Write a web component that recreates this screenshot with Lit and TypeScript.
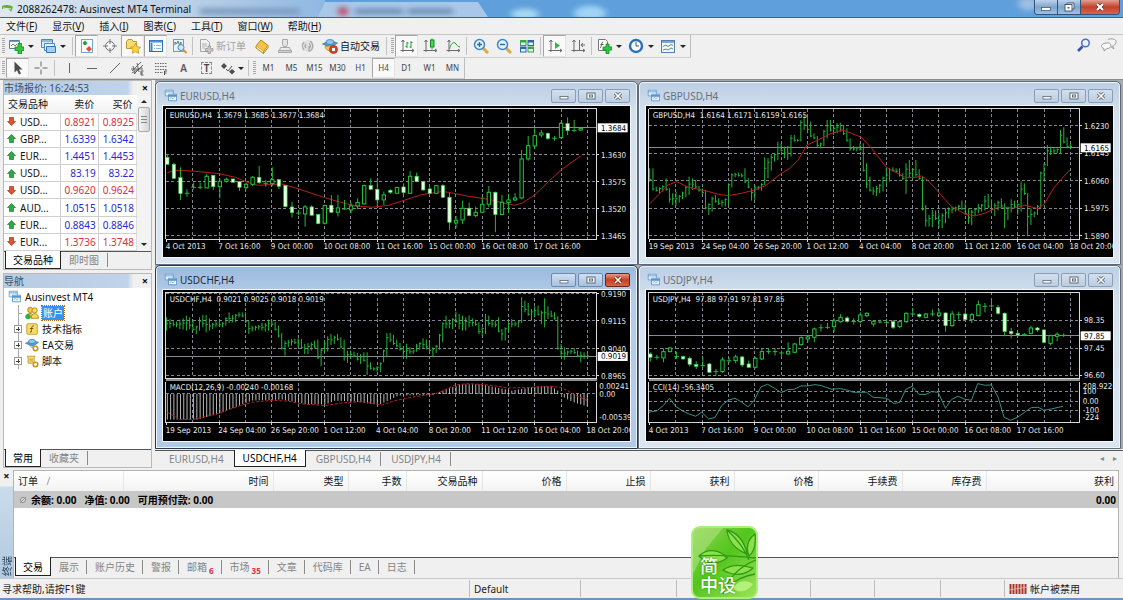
import { LitElement, html, svg, css, nothing } from "lit";
import { customElement, property } from "lit/decorators.js";
import { classMap } from "lit/directives/class-map.js";

/* ---------- icons, all on a 16 x 16 grid ---------- */
const green = "#1fa32e";
const axes = svg`<path d="M4 2v12M1.500 12.500H15M2.500 4 4 2l1.500 2M13 11l2 1.500-2 1.500" fill="none" stroke="#6b6b6b"/>`;
const pages = svg`<path d="M1.500 1.500h10v7h-10z" fill="#e3f0fb" stroke="#5b9bd0"/><path d="M1.500 3.500h10" stroke="#5b9bd0"/><path d="M5.500 6.500h10v8h-10z" fill="#eef6fd" stroke="#4a8cc6"/><path d="M5.500 8.500h10" stroke="#4a8cc6" stroke-width="2"/><path d="m7 12 2-1.500 2 1.500 2-1.500" fill="none" stroke="#6aa9d8"/>`;
const gear = svg`<circle cx="12" cy="12" r="2.600" fill="#fff" stroke="#c9931c" stroke-width="1.800"/>`;
const hat = svg`<path d="M0.500 6 8 2.500 15.500 5 9 9.500z" fill="#4f9fd4" stroke="#2c709f" stroke-width=".7"/><ellipse cx="8" cy="4" rx="4" ry="2.500" fill="#8cc7ec" stroke="#2c709f" stroke-width=".7"/>`;

const icons: Record<string, unknown> = {
  newChart: svg`<path d="M1.500 2.500h10v8h-10z" fill="#fff" stroke="#4b7fae"/><path d="M1.500 3.500h10" stroke="#6fb06f"/><path d="m3 8 2-2 2 2 2-2" fill="none" stroke="#777"/><path d="M10 5.500h3.500V9H16v3.500h-2.500V16H10v-3.500H7V9h3z" fill="#35c441" stroke="#138a20" stroke-width=".8"/>`,
  profiles: svg`<path d="M1.500 1.500h11v8h-11z" fill="#d9eafa" stroke="#4b86bd"/><path d="M1.500 3h11" stroke="#4b86bd"/><path d="M4.500 5.500h10v7h-10z" fill="#e9f3fc" stroke="#4b86bd"/><path d="M6.500 8.500h9v6h-9z" fill="#a9cdec" stroke="#3a74ab"/>`,
  market: svg`<rect x="2.500" y="1.500" width="11" height="13" fill="#fdfdfd" stroke="#6ea4d8"/><path d="m5 7-1.500-2L6 2.500 8.500 5 7 7z" fill="#24a63a"/><path d="m10 8 3 3-3 3-3-3z" fill="#e2502a"/>`,
  target: svg`<circle cx="8" cy="8" r="4.500" fill="#f6f6f6" stroke="#777"/><path d="M8 1v5M8 10v5M1 8h5M10 8h5" stroke="#777"/>`,
  favorites: svg`<path d="M1.500 3.500 3 1.500h4l1 2h3.500v7h-10z" fill="#f7dc74" stroke="#c19a2b"/><path d="m10.500 5.500 1.600 3.300 3.500.5-2.600 2.400.7 3.600-3.200-1.700-3.200 1.700.7-3.600-2.600-2.400 3.500-.5z" fill="#ffd633" stroke="#c1901b" stroke-width=".8"/>`,
  navigator: svg`<rect x="1.500" y="2.500" width="13" height="11" fill="#fff" stroke="#2e6db4"/><path d="M2 3.500h12" stroke="#4d8fd6" stroke-width="2"/><path d="M3.500 5v8" stroke="#3b82c8" stroke-width="2"/><path d="M6 7.500h1M8 7.500h5M6 10.500h1M8 10.500h5" stroke="#8ab4dd"/>`,
  tester: svg`<rect x="2.500" y="1.500" width="10" height="12" fill="#e7f1fb" stroke="#6f9dc9"/><path d="M4 7V4l1.500 2L7 3l1.500 4L10 4v4" fill="none" stroke="#5a7f5d"/><circle cx="10" cy="9.500" r="3" fill="#cde6fa" stroke="#4c87bf"/><path d="m12.500 12 3 3" stroke="#cf9a2e" stroke-width="2"/>`,
  order: svg`<path d="M2.500 1.500h6l3 3v9h-9z" fill="#f1f1f1" stroke="#a5a5a5"/><path d="M4 6h5M4 8h5M4 10h3" stroke="#b0b0b0"/><path d="M10 8h2.500v2.500H15V13h-2.500v2.500H10V13H7.500v-2.500H10z" fill="#c9c9c9" stroke="#909090" stroke-width=".7"/>`,
  editor: svg`<path d="m2 8 5-6 7 5.500-4.500 6z" fill="#f4c544" stroke="#b98213"/><path d="M2 8v2l7.500 5.500v-2M9.500 15.500l4.500-6v-2" fill="#fff2c4" stroke="#b98213"/>`,
  person: svg`<path d="M5.500 1.500h5v5l-1 2h-3l-1-2z" fill="#e3e3e3" stroke="#a8a8a8"/><path d="M3.500 9.500h9l1 3h-11z" fill="#ececec" stroke="#a8a8a8"/><path d="M1.500 12.500h13v2h-13z" fill="#d2d2d2" stroke="#a8a8a8"/>`,
  signal: svg`<circle cx="8" cy="8" r="6" fill="#e2e2e2"/><path d="M4 12A6 6 0 0 1 4 4M6 10a3 3 0 0 1 0-4M10 3a6 6 0 0 1 0 10M9 5.500a3 3 0 0 1 0 5M9 8v6" fill="none" stroke="#a9a9a9" stroke-width="1.300"/>`,
  auto: svg`${hat}<path d="M3 8.500c1 4 4 5 8 4l1-5z" fill="#efc65a" stroke="#a98122" stroke-width=".7"/><circle cx="11.500" cy="11.500" r="4" fill="#e0402c" stroke="#a3200f" stroke-width=".7"/><path d="M10 10h3v3h-3z" fill="#fff"/>`,
  bars: svg`${axes}<path d="M8 4v6M6.500 8.500H8M8 5h1.500M12 3v7M10.500 9H12M12 4.500h1.500" stroke="${green}" fill="none"/>`,
  candles: svg`${axes}<path d="M10 0.500v11" stroke="${green}"/><rect x="8.500" y="2" width="3.500" height="7" fill="#4cd35b" stroke="#138a20"/>`,
  line: svg`${axes}<path d="M4.500 11C6 5 9 3 11 6c1 1.500 2 2.500 4 3" stroke="${green}" fill="none"/>`,
  zoomIn: svg`<path d="m10 10 5 5" stroke="#d8ac3c" stroke-width="3"/><circle cx="6.500" cy="6.500" r="5" fill="#e1f1fd" stroke="#3d87c4" stroke-width="1.500"/><path d="M4 6.500h5M6.500 4v5" stroke="#2b6da8" stroke-width="1.400"/>`,
  zoomOut: svg`<path d="m10 10 5 5" stroke="#d8ac3c" stroke-width="3"/><circle cx="6.500" cy="6.500" r="5" fill="#e1f1fd" stroke="#3d87c4" stroke-width="1.500"/><path d="M4 6.500h5" stroke="#2b6da8" stroke-width="1.400"/>`,
  tile: svg`<path d="M1 2h6.500v6H1zM8.500 8.500H15v6H8.500z" fill="#3fa13f"/><path d="M8.500 2H15v6H8.500zM1 8.500h6.500v6H1z" fill="#2c64b0"/><path d="M2 4.500h4.500v2.500H2zM9.500 4.500H14v2.500H9.500zM2 11h4.500v2.500H2zM9.500 11H14v2.500H9.500z" fill="#dfeefb"/>`,
  scroll: svg`${axes}<path d="M8 4v7l5-3.500z" fill="#36b544"/>`,
  shift: svg`${axes}<path d="M9.500 2v10M15 7h-4M13 5l-2 2 2 2" stroke="#666" fill="none"/>`,
  indicator: svg`<path d="M2.500 1.500h7l2 2v9h-9z" fill="#fff" stroke="#777"/><path d="M7 4c-2 0-1 5-3 6M4.500 6.500h3" stroke="#555" fill="none"/><path d="M10 6h3v3h3v3h-3v3.500h-3V12H7V9h3z" fill="#35c441" stroke="#138a20" stroke-width=".8"/>`,
  clock: svg`<circle cx="8" cy="8" r="6" fill="#f4faff" stroke="#2a6fbd" stroke-width="2.400"/><path d="M8 4v4h3" stroke="#555" fill="none"/>`,
  template: svg`<rect x="1.500" y="2.500" width="13" height="12" fill="#f3f8fd" stroke="#527fa9"/><path d="M2 4h12" stroke="#7ba7d2" stroke-width="2"/><path d="m3 8.500 3-1.500 2 1.500 3-2 2 1M3 12l3-1 2 1 3-2 2 1" stroke="#5d8b74" fill="none"/>`,
  cursor: svg`<path d="M4.500 1.500v11l2.500-2.300 2 4.300 2-1-2-4h3.500z" fill="#4c4c4c"/>`,
  cross: svg`<path d="M8 1.500v5M8 9.500v5M1.500 8h5M9.500 8h5" stroke="#666"/>`,
  vline: svg`<path d="M8.500 3v10" stroke="#666"/>`,
  hline: svg`<path d="M3 8.500h10" stroke="#666"/>`,
  trend: svg`<path d="m3 13 10-10" stroke="#666"/>`,
  channel: svg`<path d="m2 11 9-9M4 14l9-9M1 9h12M3 6l2 8M7 3l2 9M2 13l10-6" stroke="#666" fill="none"/><path d="M13.500 11H11v4h2.500M11 13h2" stroke="#555" fill="none"/>`,
  fibo: svg`<path d="M2 3.500h12M2 6.500h12M2 9.500h12M2 12.500h8" stroke="#666" stroke-dasharray="1.500 1"/><path d="M14 11h-2.500v4M11.500 13h2" stroke="#555" fill="none"/>`,
  arrows: svg`<path d="m4 3 3 3-3 3-3-3zM12 9l3 2.500-3 3-3-3z" fill="#4d4d4d"/><path d="m6 9 2 2 4-5" fill="none" stroke="#4d4d4d"/>`,
  search: svg`<path d="m2 14 4.500-4.500" stroke="#3557a8" stroke-width="2.600"/><circle cx="9.500" cy="6" r="3.800" fill="#eef3ff" stroke="#4c6fbe" stroke-width="1.500"/>`,
  chat: svg`<path d="M7 3c0-1.500 8-2 8 1.500S12 9 11.500 9L13 12 9 9" fill="#f4f4f4" stroke="#9b9b9b"/><path d="M5 6c3-.5 5 .5 5 2.500S8 11.500 6 11.500L3 14v-2.500C-1 10.500 0 6.500 5 6z" fill="#fafafa" stroke="#9b9b9b"/>`,
  pages,
  account: svg`<circle cx="6" cy="4.500" r="3" fill="#f3c544" stroke="#b28313"/><path d="M1 13c0-6 9-6 9 0z" fill="#f3c544" stroke="#b28313"/><circle cx="11" cy="5" r="3" fill="#f9d866" stroke="#b28313"/><path d="M7 14c0-7 8.500-7 8.500 0z" fill="#f9d866" stroke="#b28313"/><circle cx="3.500" cy="12" r="3" fill="#2fae3c"/>`,
  func: svg`<rect x="2" y="2" width="12" height="12" rx="1" fill="#f7dc66" stroke="#c2982a"/><path d="M10 4.500c-3-.5-2 3-3 7H5.500M5.500 7.500h4" stroke="#5b4a10" fill="none"/>`,
  expert: svg`${hat}<path d="M5 8c1 3 3 3 5 3" fill="none" stroke="#c9931c"/>${gear}`,
  script: svg`<path d="M2.500 2.500h9l-1 2v6h-7v-6z" fill="#f7dc74" stroke="#c19a2b"/><path d="M5 6h4M5 8h4" stroke="#c19a2b"/>${gear}`,
};

@customElement("mt-icon")
class MtIcon extends LitElement {
  @property() name = "";
  static styles = css`
    :host { display: inline-flex; width: 16px; height: 16px; flex: none; }
    svg { width: 100%; height: 100%; }
  `;
  render() {
    return html`<svg viewBox="0 0 16 16" aria-hidden="true">${icons[this.name]}</svg>`;
  }
}

/* ---------- chart data, drawn in thirds of a pixel ---------- */
type Pt = [number, number];
/* high, body top, body bottom, low, 1 = bearish (filled) */
type Candle = [number, number, number, number, number];
interface Chart {
  id: string;
  info: string;
  active?: boolean;
  top: number;
  plot: [number, number];
  levels: [number, string][];
  price: [number, string];
  times: string[];
  candles?: Candle[];
  bars?: Pt[];
  average?: string;
  sub?: { title: string; kind: "macd" | "cci"; labels: [number, string][] };
}

const eur: Candle[] = [
  [222,232,253,253,1],[248,253,295,297,1],[262,293,341,360,1],[328,339,341,350,1],[308,321,323,328,1],[308,321,323,328,1],
  [282,289,324,324,0],[286,286,320,330,1],[295,304,320,355,0],[293,298,304,308,0],[297,297,307,307,1],[305,305,322,333,1],
  [308,313,323,328,0],[288,292,313,318,0],[258,292,308,312,1],[300,309,311,320,1],[262,299,311,318,0],[299,299,319,327,1],
  [315,317,380,382,1],[365,381,398,413,1],[390,398,401,405,1],[375,381,402,440,0],[376,381,406,406,1],[402,404,431,433,1],
  [374,377,430,434,0],[345,376,397,400,1],[345,384,397,410,0],[360,385,389,390,1],[368,378,390,400,0],[355,368,378,388,0],
  [314,317,372,374,0],[295,317,328,330,1],[298,328,360,378,1],[335,345,360,375,0],[328,331,337,342,1],[320,323,340,342,0],
  [310,321,338,352,1],[273,289,340,342,0],[278,289,305,307,1],[303,305,330,332,1],[320,327,340,342,1],[315,317,340,342,0],
  [313,317,352,354,1],[338,352,427,450,1],[408,421,429,445,0],[362,385,420,432,0],[368,385,407,409,1],[380,397,407,412,0],
  [350,373,397,400,0],[318,337,373,382,0],[335,337,404,457,1],[345,367,404,406,0],[342,360,368,400,0],[340,354,360,364,0],
  [210,237,354,358,0],[168,197,237,242,0],[145,167,198,208,0],[150,159,165,172,0],[158,160,175,180,1],[168,174,176,182,1],
  [126,130,173,176,0],[112,131,152,165,1],[120,151,153,155,1],[143,145,150,153,0],
];
const jpy: Candle[] = [
  [270,275,285,298,1],[278,284,286,292,1],[258,268,287,300,0],[254,257,268,270,0],[268,282,284,290,1],[280,283,290,292,1],
  [283,288,306,312,1],[297,307,312,320,1],[285,309,311,316,1],[302,305,330,332,1],[320,327,329,340,1],[285,293,328,332,0],
  [285,294,297,302,1],[277,284,295,303,0],[282,284,308,314,1],[295,305,315,317,1],[284,288,315,318,0],[260,268,290,293,0],
  [258,267,269,275,1],[258,267,269,280,1],[265,270,274,285,1],[240,267,275,277,0],[242,245,270,273,0],[222,226,247,250,0],
  [219,224,230,240,0],[196,200,225,240,0],[185,195,198,208,1],[182,193,197,200,1],[168,176,193,210,0],[155,165,178,181,0],
  [162,167,177,181,1],[168,176,179,187,1],[150,158,178,183,0],[150,153,160,164,0],[173,177,185,193,0],[172,177,181,184,1],
  [174,180,182,184,1],[173,178,195,200,1],[174,178,193,198,0],[150,153,178,182,0],[138,154,156,158,1],[153,156,162,166,1],
  [152,155,165,168,0],[142,153,157,162,1],[140,152,160,165,0],[150,152,190,208,1],[146,155,190,193,0],[148,156,158,172,1],
  [145,155,172,177,1],[152,157,172,182,0],[115,127,160,162,0],[122,130,134,150,1],[108,130,132,136,1],[128,135,153,157,1],
  [150,153,208,222,1],[197,207,214,228,1],[208,213,218,222,1],[212,215,219,222,1],[190,197,213,216,0],[194,197,203,208,1],
  [200,203,240,243,1],[217,220,243,250,0],[210,216,222,237,0],[213,218,220,224,1],
];
const gbp: Pt[] = [
  [265,305],[265,332],[320,335],[322,340],[316,335],[295,332],[325,368],[340,375],[335,378],[345,368],[335,358],[318,352],
  [290,345],[295,330],[300,325],[318,335],[325,342],[330,388],[370,405],[350,395],[345,368],[355,375],[360,380],[355,380],
  [310,375],[280,322],[278,292],[278,290],[280,292],[265,310],[295,325],[325,362],[315,360],[318,330],[310,332],[232,315],
  [235,295],[222,272],[220,245],[185,240],[190,215],[200,235],[198,240],[165,230],[165,185],[178,185],[120,185],[105,150],
  [110,160],[125,172],[160,178],[168,202],[188,205],[150,198],[120,175],[120,155],[135,165],[130,160],[128,155],[135,165],
  [145,185],[175,212],[198,212],[200,214],[190,212],[190,275],[250,325],[290,335],[322,345],[318,348],[312,340],[290,335],
  [262,315],[265,305],[262,275],[265,278],[265,290],[280,300],[250,342],[240,295],[265,295],[240,290],[268,300],[290,392],
  [375,440],[405,440],[390,442],[392,420],[400,445],[400,445],[385,430],[382,415],[380,400],[380,395],[375,390],[362,390],
  [370,405],[385,432],[390,435],[385,408],[372,400],[372,395],[348,392],[342,385],[358,400],[370,408],[362,392],[355,382],
  [370,445],[380,420],[358,398],[362,385],[370,405],[305,395],[310,345],[340,465],[385,435],[395,412],[375,405],[275,385],
  [250,305],[195,258],[200,225],[205,222],[205,220],[150,220],[142,190],[172,205],[190,208],
];
const chf: Pt[] = [
  [165,205],[170,198],[175,192],[178,195],[172,200],[168,202],[160,205],[165,200],[172,205],[190,215],[165,205],[158,195],
  [158,210],[168,205],[182,200],[175,195],[178,192],[180,195],[165,190],[150,182],[158,180],[155,180],[150,165],[150,165],
  [150,182],[175,215],[190,208],[190,205],[188,202],[182,205],[182,208],[172,205],[175,190],[178,205],[190,225],[212,262],
  [235,280],[232,255],[230,250],[230,245],[228,255],[230,260],[245,275],[242,275],[240,265],[235,258],[232,290],[260,312],
  [235,272],[222,268],[215,248],[220,245],[215,235],[225,258],[232,295],[265,302],[265,290],[268,285],[272,295],[275,305],
  [270,298],[270,338],[300,322],[315,325],[312,328],[300,330],[262,300],[212,285],[212,240],[218,248],[232,255],[242,265],
  [255,285],[245,290],[255,275],[262,275],[245,268],[240,262],[228,260],[232,262],[240,268],[255,285],[248,272],[215,262],
  [180,240],[160,198],[172,198],[168,200],[148,182],[155,200],[160,205],[165,205],[160,195],[168,192],[172,190],[180,215],
  [195,220],[155,215],[160,190],[172,195],[175,195],[165,210],[200,235],[195,235],[180,210],[170,195],[178,192],[175,195],
  [105,182],[115,150],[122,160],[140,175],[132,165],[130,160],[145,185],[108,195],[132,170],[145,165],[150,172],[162,262],
  [245,285],[255,292],[265,280],[262,275],[258,275],[265,285],[268,300],[270,290],[272,290],
];
const macdHist: Pt[] = [
  [34,472],[125,472],[190,455],[240,435],[290,415],[380,412],[450,425],[510,427],[540,415],[600,418],[670,428],[700,415],
  [730,400],[835,398],[850,390],[890,375],[920,366],[980,366],[1020,375],[1070,385],[1110,378],[1150,372],[1190,373],
  [1210,386],[1230,408],[1260,422],[1297,432],
];
const macdSignal =
  "36,450 75,472 113,472 190,453 250,432 290,420 350,414 400,417 440,425 510,430 560,422 620,418 680,428 720,415 770,405 850,392 900,368 940,364 1000,368 1060,377 1120,376 1190,372 1220,376 1260,398 1297,415";
const cciLine =
  "32,450 55,446 75,430 93,408 112,432 134,447 154,456 172,462 190,450 211,470 230,466 250,430 270,414 290,408 311,420 329,434 348,414 368,374 388,366 409,378 429,391 449,382 468,381 488,371 508,371 530,367 550,370 580,381 605,379 630,384 645,390 685,390 705,405 745,408 768,424 785,420 803,381 822,372 842,396 862,397 880,388 900,390 922,438 940,412 960,402 980,411 1000,414 1019,364 1040,369 1060,368 1080,405 1098,465 1117,474 1137,466 1160,450 1180,436 1200,435 1218,444 1240,440 1275,432";

const shortTimes = ["4 Oct 2013", "7 Oct 16:00", "9 Oct 00:00", "10 Oct 08:00", "11 Oct 16:00", "15 Oct 00:00", "16 Oct 08:00", "17 Oct 16:00"];
const longTimes = ["19 Sep 2013", "24 Sep 04:00", "26 Sep 20:00", "1 Oct 12:00", "4 Oct 04:00", "8 Oct 20:00", "11 Oct 12:00", "16 Oct 04:00", "18 Oct 20:00"];

const charts: Chart[] = [
  {
    id: "EURUSD,H4", info: "1.3679 1.3685 1.3677 1.3684", top: 78, plot: [87, 478],
    levels: [[225, "1.3630"], [306, "1.3575"], [387, "1.3520"], [468, "1.3465"]],
    price: [143, "1.3684"], times: shortTimes, candles: eur,
    average: "36,278 60,271 110,273 190,281 240,292 290,312 310,316 380,312 430,327 508,353 560,368 600,378 650,382 700,376 744,362 800,344 860,335 880,337 940,349 1000,358 1060,373 1079,376 1100,370 1139,345 1180,305 1218,270 1277,228",
  },
  {
    id: "GBPUSD,H4", info: "1.6164 1.6171 1.6159 1.6165", top: 78, plot: [87, 478],
    levels: [[138, "1.6230"], [220, "1.6145"], [303, "1.6060"], [385, "1.5975"], [468, "1.5890"]],
    price: [203, "1.6165"], times: longTimes, bars: gbp,
    average: "34,372 60,345 90,315 115,305 150,322 200,332 240,343 270,347 310,340 350,330 380,318 430,280 455,265 480,240 506,195 540,180 575,162 613,150 640,160 670,172 700,205 745,262 800,292 830,293 850,288 870,302 900,335 940,380 980,402 1010,408 1040,400 1080,382 1130,384 1160,376 1200,386 1220,370 1250,320 1295,270",
  },
  {
    id: "USDCHF,H4", info: "0.9021 0.9025 0.9018 0.9019", active: true, top: 83, plot: [90, 349],
    levels: [[95, "0.9190"], [176, "0.9115"], [260, "0.9040"], [341, "0.8965"]],
    price: [282, "0.9019"], times: longTimes, bars: chf,
    sub: { title: "MACD(12,26,9) -0.00240 -0.00168", kind: "macd", labels: [[371, "0.00241"], [395, "0.00"], [465, "-0.00539"]] },
  },
  {
    id: "USDJPY,H4", info: "97.88 97.91 97.81 97.85", top: 83, plot: [90, 349],
    levels: [[174, "98.35"], [258, "97.45"], [340, "96.60"]],
    price: [220, "97.85"], times: shortTimes, candles: jpy,
    sub: { title: "CCI(14) -56.3405", kind: "cci", labels: [[373, "208.9226"], [388, "100"], [418, "0.00"], [445, "-100"], [465, "-224"]] },
  },
];

const LEFT = 32;
const RIGHT = 1325;

function interpolate(pts: Pt[], x: number): number {
  for (let i = 1; i < pts.length; i++) {
    const [x0, y0] = pts[i - 1];
    const [x1, y1] = pts[i];
    if (x <= x1) return y0 + ((y1 - y0) * (x - x0)) / (x1 - x0);
  }
  return pts[pts.length - 1][1];
}

@customElement("mt-chart")
class MtChart extends LitElement {
  @property({ attribute: false }) chart!: Chart;

  static styles = css`
    :host { display: block; background: #000; overflow: hidden; min-height: 0; }
    svg { display: block; width: 100%; height: 100%; }
    text { font: 24px "DejaVu Sans Condensed", "Noto Sans", sans-serif; fill: #e9e9e9; }
    .tag { fill: #000; }
    .frame { fill: none; stroke: #d8d8d8; stroke-width: 3; shape-rendering: crispEdges; }
    .grid { fill: none; stroke: #81858f; stroke-width: 3; stroke-dasharray: 9 7; shape-rendering: crispEdges; }
    .now { stroke: #848c94; stroke-width: 3; shape-rendering: crispEdges; }
    .split { stroke: #8f8f8f; stroke-width: 6; shape-rendering: crispEdges; }
    .wick { stroke: #22b83a; stroke-width: 3; fill: none; }
    .up { fill: #000; stroke: #22c43c; stroke-width: 3; }
    .down { fill: #e8ffe2; stroke: #35d44b; stroke-width: 2; }
    .avg { fill: none; stroke: #b8201c; stroke-width: 3; }
    .signal { stroke-dasharray: 9 5; }
    .hist { stroke: #b9b9b9; stroke-width: 3; }
    .cci { fill: none; stroke: #3a8f87; stroke-width: 3; }
  `;

  private candles(list: Candle[]) {
    const step = (1277 - 36) / (list.length - 1);
    return list.map(([hi, top, bottom, lo, bear], i) => {
      const x = 36 + i * step;
      const wick = svg`<path class="wick" d="M${x} ${hi}V${lo}"/>`;
      return bottom - top <= 4
        ? svg`${wick}<path class="wick" d="M${x - 7} ${(top + bottom) / 2}h14"/>`
        : svg`${wick}<rect class=${bear ? "down" : "up"} x=${x - 5} y=${top} width="10" height=${bottom - top}/>`;
    });
  }

  private bars(list: Pt[]) {
    const step = (1297 - 34) / (list.length - 1);
    const d = list
      .map(([hi, lo], i) => {
        const x = 34 + i * step;
        const next = list[Math.min(i + 1, list.length - 1)];
        const close = Math.min(lo - 4, Math.max(hi + 4, (next[0] + next[1]) / 2));
        return `M${x} ${hi}V${lo}M${x} ${close}h5`;
      })
      .join("");
    return svg`<path class="wick" d=${d}/>`;
  }

  private sub(c: Chart) {
    if (!c.sub) return nothing;
    const macd = c.sub.kind === "macd";
    const xs = Array.from({ length: 129 }, (_, i) => 36 + i * 9.85);
    return svg`
      <path class="frame" d="M${LEFT} 360V481H${RIGHT}V360"/>
      <path class="split" d="M${LEFT} 354H${RIGHT}"/>
      ${macd
        ? svg`<path class="grid" d="M${LEFT} 395H${RIGHT}"/>
            <path class="hist" d=${xs.map((x) => `M${x} 395V${interpolate(macdHist, x)}`).join("")}/>
            <polyline class="avg signal" points=${macdSignal}/>`
        : svg`<path class="grid" d="M${LEFT} 388H${RIGHT}M${LEFT} 418H${RIGHT}M${LEFT} 445H${RIGHT}"/>
            <polyline class="cci" points=${cciLine}/>`}
      <text x="43" y="384">${c.sub.title}</text>
      ${c.sub.labels.map(([y, t]) => svg`<text x=${macd ? 1333 : 1334} y=${y + 8}>${t}</text>`)}`;
  }

  render() {
    const c = this.chart;
    const [top, bottom] = c.plot;
    const base = c.sub ? 481 : 478;
    const columns = Array.from({ length: 16 }, (_, i) => 113 + i * 78.95);
    return html`
      <svg viewBox="23 ${c.top} 1402 450" preserveAspectRatio="xMinYMin meet" role="img" aria-label=${c.id}>
        <path class="grid" d=${columns.map((x) => `M${x} ${top}V${base}`).join("") + c.levels.map(([y]) => `M${LEFT} ${y}H${RIGHT}`).join("")}/>
        <path class="now" d="M${LEFT} ${c.price[0]}H${RIGHT}"/>
        ${c.bars ? this.bars(c.bars) : nothing}
        ${c.average ? svg`<polyline class="avg" points=${c.average}/>` : nothing}
        ${c.candles ? this.candles(c.candles) : nothing}
        <path class="frame" d="M${LEFT} ${top}H${RIGHT}V${bottom}H${LEFT}Z"/>
        <path class="frame" d=${c.levels.map(([y]) => `M${RIGHT} ${y}h7`).join("") + c.times.map((_, i) => `M${34 + i * 157.9} ${base}v8`).join("")}/>
        ${this.sub(c)}
        <text x="43" y=${c.top + 36}>${c.id}&nbsp; ${c.info}</text>
        ${c.levels.map(([y, t]) => svg`<text x="1338" y=${y + 8}>${t}</text>`)}
        <rect x="1328" y=${c.price[0] - 13} width="90" height="27" fill="#fff"/>
        <text class="tag" x="1338" y=${c.price[0] + 9}>${c.price[1]}</text>
        ${c.times.map((t, i) => svg`<text x=${31 + i * 157.9} y=${c.top + 430}>${t}</text>`)}
      </svg>`;
  }
}

@customElement("mt-window")
class MtWindow extends LitElement {
  @property({ attribute: false }) chart!: Chart;

  static styles = css`
    :host { display: block; min-width: 0; min-height: 0; }
    .win {
      box-sizing: border-box; height: 100%; display: flex; flex-direction: column;
      padding: 0 7px 7px; border: 1px solid #5d6b7a; border-radius: 5px 5px 0 0;
      background: linear-gradient(#bccfe4, #d3e0ee 30px, #dae5f1);
      box-shadow: inset 0 0 0 1px #eef4fa; color: #67717d;
    }
    .active { border-color: #27394c; background: linear-gradient(#9bb9dc, #b4cdea 30px, #b0cbe9); color: #1e2a38; }
    .bar { flex: none; box-sizing: border-box; display: flex; align-items: center; height: 25px; gap: 3px; padding: 3px 0 0 1px; }
    .active .bar { height: 24px; }
    .name { flex: 1; font: 10px/14px "Noto Sans", sans-serif; }
    mt-icon { width: 13px; height: 13px; }
    .btns { display: flex; gap: 2px; }
    button {
      width: 25px; height: 14px; padding: 0; display: grid; place-items: center;
      border: 1px solid #8a9db4; border-radius: 2px; background: linear-gradient(#d3dfed, #bccde1); color: #5b6878;
    }
    .active button { border-color: #6f89aa; background: linear-gradient(#cfe0f4, #a5c0e0); }
    .active .close { background: linear-gradient(#e79a86, #c43f24 50%, #d9664a); border-color: #6d2418; }
    button svg { width: 10px; height: 8px; }
    mt-chart { flex: 1; box-shadow: 0 0 0 1px #f4f8fc; }
    .win .bar { height: 24px; }
  `;

  render() {
    const on = !!this.chart.active;
    const ink = "#5b6878";
    return html`
      <section class=${classMap({ win: true, active: on })}>
        <header class="bar">
          <mt-icon name="pages"></mt-icon>
          <span class="name">${this.chart.id}</span>
          <div class="btns">
            <button aria-label="最小化"><svg viewBox="0 0 10 8"><rect x="1" y="4.500" width="8" height="2.500" fill="#fff" stroke=${ink} stroke-width=".8"/></svg></button>
            <button aria-label="最大化"><svg viewBox="0 0 10 8"><rect x="1" y="1" width="8" height="6" fill="#fff" stroke=${ink}/><rect x="3.500" y="3" width="3" height="2" fill="none" stroke=${ink}/></svg></button>
            <button class="close" aria-label="关闭"><svg viewBox="0 0 10 8"><path d="m2 1 6 6M8 1 2 7" stroke=${on ? "#7a2618" : ink} stroke-width="3.200"/><path d="m2 1 6 6M8 1 2 7" stroke="#fff" stroke-width="1.600"/></svg></button>
          </div>
        </header>
        <mt-chart .chart=${this.chart}></mt-chart>
      </section>`;
  }
}

/* ---------- application shell ---------- */
const menus = [["文件", "F"], ["显示", "V"], ["插入", "I"], ["图表", "C"], ["工具", "T"], ["窗口", "W"], ["帮助", "H"]];

interface Tool { icon?: string; text?: string; kind?: "sep" | "grip" | "split" | "letter" | "boxed"; on?: boolean; off?: boolean }
const sep: Tool = { kind: "sep" };
const grip: Tool = { kind: "grip" };
const mainTools: Tool[] = [
  grip, { icon: "newChart", kind: "split" }, { icon: "profiles", kind: "split" }, sep,
  { icon: "market", on: true }, { icon: "target" }, { icon: "favorites", on: true }, { icon: "navigator", on: true }, { icon: "tester" }, sep,
  { icon: "order", text: "新订单", off: true }, { icon: "editor" }, { icon: "person" }, { icon: "signal" }, { icon: "auto", text: "自动交易" }, sep, grip,
  { icon: "bars", on: true }, { icon: "candles" }, { icon: "line" }, sep,
  { icon: "zoomIn" }, { icon: "zoomOut" }, { icon: "tile" }, sep,
  { icon: "scroll", on: true }, { icon: "shift" }, sep,
  { icon: "indicator", kind: "split" }, { icon: "clock", kind: "split" }, { icon: "template", kind: "split" },
];
const lineTools: Tool[] = [
  grip, { icon: "cursor", on: true }, { icon: "cross" }, sep,
  { icon: "vline" }, { icon: "hline" }, { icon: "trend" }, { icon: "channel" }, { icon: "fibo" },
  { kind: "letter", text: "A" }, { kind: "boxed", text: "T" }, { icon: "arrows", kind: "split" }, sep, grip,
];
const periods = ["M1", "M5", "M15", "M30", "H1", "H4", "D1", "W1", "MN"];

const quotes: [string, string, string, boolean][] = [
  ["USD...", "0.8921", "0.8925", false], ["GBP...", "1.6339", "1.6342", true], ["EUR...", "1.4451", "1.4453", true],
  ["USD...", "83.19", "83.22", true], ["USD...", "0.9620", "0.9624", false], ["AUD...", "1.0515", "1.0518", true],
  ["EUR...", "0.8843", "0.8846", true], ["EUR...", "1.3736", "1.3748", false],
];
const tree = [["account", "账户"], ["func", "技术指标"], ["expert", "EA交易"], ["script", "脚本"]];
const orderColumns: [string, number][] = [
  ["时间", 150], ["类型", 75], ["手数", 58], ["交易品种", 76], ["价格", 84], ["止损", 84], ["获利", 84], ["价格", 84], ["手续费", 84], ["库存费", 84],
];
const terminalTabs: [string, string?][] = [
  ["交易"], ["展示"], ["账户历史"], ["警报"], ["邮箱", "6"], ["市场", "35"], ["文章"], ["代码库"], ["EA"], ["日志"],
];

@customElement("app-root")
class AppRoot extends LitElement {
  static styles = css`
    :host {
      display: flex; flex-direction: column; height: 100vh; overflow: hidden;
      background: #f0f0f0; color: #151515;
      font: 10px/14px "Noto Sans", "Noto Sans CJK SC", sans-serif;
    }
    * { box-sizing: border-box; }
    button { font: inherit; color: inherit; background: none; border: 0; padding: 0; margin: 0; white-space: nowrap; }
    table { border-collapse: collapse; table-layout: fixed; width: 100%; }
    th { font-weight: 400; }

    .title { position: relative; flex: none; display: flex; height: 18px; background: #5f9fdb; border-bottom: 1px solid #39648f; }
    .glass { position: absolute; inset: 0; width: 100%; height: 100%; }
    .caption { position: relative; display: flex; align-items: center; gap: 4px; padding-left: 2px; flex: 1; color: #0b1118; }
    .leaf { width: 11px; height: 10px; }
    .winbtns { position: relative; display: flex; height: 15px; margin-right: 3px; border: 1px solid #33547a; border-top: 0; border-radius: 0 0 4px 4px; overflow: hidden; }
    .winbtns button { width: 23px; display: grid; place-items: center; background: linear-gradient(#bcd3ec, #7fa5cd 50%, #9cc0e4); border-right: 1px solid #33547a; }
    .winbtns .quit { width: 38px; border: 0; background: linear-gradient(#e0a093, #c4402b 50%, #d8664a); }
    .winbtns svg { width: 12px; height: 10px; }

    .menu { flex: none; display: flex; align-items: center; gap: 15px; height: 17px; padding-left: 6px; border-bottom: 1px solid #c6c6c6; }
    .tools { flex: none; display: flex; align-items: stretch; height: 23px; }
    .lines { height: 21px; }
    .group { display: flex; align-items: stretch; border-right: 1px solid #bdbdbd; border-bottom: 1px solid #cfcfcf; }
    .btn { width: 23px; display: flex; align-items: center; justify-content: center; border: 1px solid transparent; }
    .on { background: #f9f9f9; border-color: #a6a6a6 #e4e4e4 #e4e4e4 #a6a6a6; }
    .wide { width: auto; gap: 2px; padding: 0 3px 0 2px; }
    .off { color: #a2a2a2; }
    .split { width: 32px; justify-content: flex-start; gap: 4px; padding-left: 1px; }
    .lines .split { width: 28px; gap: 2px; }
    .caret { border: 3px solid transparent; border-top-color: #222; border-bottom: 0; }
    .sep { width: 5px; display: flex; justify-content: center; }
    .sep::before { content: ""; width: 1px; background: #c2c2c2; margin: 2px 0; }
    .grip { width: 6px; margin: 3px 0; background: repeating-linear-gradient(#a9a9a9 0 1px, transparent 1px 2px) 2px 0 / 3px 100% no-repeat; }
    .letter { font-weight: 600; color: #5a5a5a; }
    .boxed { border: 1px dashed #888; line-height: 10px; padding: 0 2px; color: #444; font-weight: 600; }
    .period { font-size: 8px; color: #444; }
    .corner { margin-left: auto; display: flex; gap: 9px; align-items: center; padding-right: 6px; }

    .main { flex: 1; min-height: 0; display: flex; border-top: 1px solid #8c8c8c; }
    .side { width: 152px; flex: none; display: flex; flex-direction: column; gap: 3px; padding: 0 0 2px 3px; margin-right: 3px; }
    .panel { flex: none; display: flex; flex-direction: column; border: 1px solid #b9b9b9; background: #fff; min-height: 0; }
    .nav { flex: 1; }
    .head { display: flex; align-items: center; height: 14px; background: linear-gradient(90deg, #b7cbe3, #bfd3ea 84%, #f0f0f0 88%); color: #38506c; }
    .head h2 { flex: 1; margin: 0; font: inherit; }
    .x { width: 12px; font-weight: 700; font-size: 11px; line-height: 12px; color: #111; }
    .quotes { display: flex; flex: none; }
    .quotes table { flex: 1; width: 0; height: 156px; }
    .quotes th { height: 18px; text-align: right; padding: 0 4px 0 0; background: linear-gradient(#fff, #f1f1f1); }
    .quotes th:first-child { text-align: left; padding-left: 4px; width: 56px; }
    .quotes td { height: 17px; padding: 0 2px 0 0; text-align: right; border: 1px solid #cfcfcf; border-left: 0; line-height: 14px; }
    .quotes td:first-child { text-align: left; padding-left: 3px; }
    .quotes td:last-child { border-right-color: #ddd; }
    .sym { display: flex; align-items: center; gap: 4px; }
    .sym svg { width: 9px; height: 9px; }
    .up td + td { color: #2a2ad2; }
    .dn td + td { color: #dc3038; }
    .scroll { width: 14px; display: flex; flex-direction: column; align-items: center; background: #f3f3f3; padding: 5px 0; }
    .thumb { width: 12px; height: 25px; margin: 4px 0 auto; border: 1px solid #a9a9a9; border-radius: 2px; background: repeating-linear-gradient(#888 0 1px, transparent 1px 3px) center 8px / 6px 7px no-repeat, linear-gradient(90deg, #f5f5f5, #d4d4d4); }
    .caret.flip { transform: rotate(180deg); }

    .tabs { flex: none; display: flex; height: 18px; background: #f0f0f0; border-top: 1px solid #555; color: #858585; padding-left: 1px; }
    .tab { position: relative; height: 14px; margin-top: 1px; padding: 0 8px 0 8px; border-right: 1px solid #8a8a8a; }
    .tab.cur { height: 18px; margin-top: -1px; padding: 0 7px; background: #fff; color: #000; border: 1px solid #222; border-top: 0; }
    .tab.bare { border-right-color: transparent; }
    .count { display: inline-block; height: 8px; margin-left: 2px; font-size: 8px; line-height: 8px; font-weight: 700; color: #dd3344; vertical-align: -3px; }

    .tree { flex: 1; margin: 0; padding: 0 0 0 4px; list-style: none; background: #fff; }
    .tree ul { margin: 0; padding: 0 0 0 6px; list-style: none; }
    .node { display: flex; align-items: center; height: 16px; gap: 3px; }
    .node mt-icon { width: 14px; height: 14px; }
    .root { height: 17px; gap: 4px; }
    .root mt-icon { width: 13px; height: 13px; }
    .twig { width: 8px; align-self: stretch; display: grid; place-items: center; background: linear-gradient(#aaa, #aaa) 4px 0 / 1px 100% no-repeat, linear-gradient(#aaa, #aaa) 4px 50% / 8px 1px no-repeat; }
    .plus { width: 8px; height: 8px; padding: 0; background: linear-gradient(#444, #444) center / 4px 1px no-repeat, linear-gradient(#444, #444) center / 1px 4px no-repeat, #fff; border: 1px solid #999; }
    .picked { background: #3393f3; color: #fff; outline: 1px dotted #b06a1c; padding: 0 1px; }

    .work { flex: 1; min-width: 0; display: flex; flex-direction: column; }
    .mdi { flex: 1; min-height: 0; display: grid; grid-template: 1fr 1fr / 1fr 1fr; padding: 1px 2px 0 0; background: #a5a9ad; }
    .charttabs { height: 20px; padding: 0 6px 2px 0; margin-top: 1px; align-items: flex-start; }
    .charttabs .tab { padding: 0 9px 0 10px; }
    .charttabs .tab:first-child { padding-left: 14px; }
    .charttabs .tab.cur { padding: 0 8px; height: 17px; }
    .arrows { margin-left: auto; display: flex; gap: 9px; color: #888; font-size: 8px; }

    .terminal { flex: none; display: flex; height: 108px; }
    .strip { width: 13px; display: flex; flex-direction: column; align-items: center; justify-content: space-between; background: linear-gradient(#f0f0f0 16px, #c9dcec 17px, #b2c9de); padding-bottom: 2px; color: #27415c; }
    .strip h2 { margin: 0; font: inherit; line-height: 12px; writing-mode: vertical-rl; text-orientation: sideways; transform: rotate(180deg); }
    .pane { flex: 1; min-width: 0; display: flex; flex-direction: column; margin-right: 4px; border: 1px solid #b3b3b3; border-bottom: 0; background: #fff; }
    .orders { flex: 1; }
    .orders th { height: 20px; padding: 0 4px 0 0; text-align: right; background: linear-gradient(#fff, #f3f3f4); border-right: 1px solid #e6e6e6; }
    .orders th:first-child { text-align: left; padding-left: 4px; }
    .orders th:last-child { border: 0; }
    .slash { color: #999; margin-left: 6px; }
    .orders td { height: 17px; padding: 0 2px 0 5px; background: #c7c7c7; font-weight: 700; color: #000; text-align: right; }
    .orders td:first-child { text-align: left; }
    .sum { display: flex; align-items: center; gap: 8px; }
    .sum svg { width: 8px; height: 8px; margin-right: -4px; }
    .pane .tabs { height: 21px; padding: 0 0 0 1px; }
    .pane .tab { padding: 0 7px 0 8px; margin-top: 2px; }
    .pane .tab.cur { margin-top: -1px; height: 19px; padding: 2px 7px 0; }

    .status { flex: none; display: flex; height: 20px; border-top: 1px solid #c9c9c9; color: #222; }
    .cell { padding: 2px 0 0 4px; margin: 1px 0; border-left: 1px solid #bdbdbd; }
    .cell:first-child { border: 0; padding-left: 2px; }
    .conn { display: flex; gap: 2px; }
    .conn svg { width: 19px; height: 12px; margin-top: 1px; }
    .floor { flex: none; height: 2px; background: #6f93bb; }

    .ime { position: absolute; left: 691px; bottom: 1px; width: 67px; height: 73px; border-radius: 9px; overflow: hidden; border: 2px solid #a8f07a; background: linear-gradient(135deg, #8fd653, #53c51d 45%, #9be25a); }
    .ime svg { position: absolute; inset: 0; width: 100%; height: 100%; }
    .ime p { position: absolute; left: 7px; bottom: 3px; margin: 0; font: 500 18px/19px "Noto Sans CJK SC", sans-serif; color: #fff; text-shadow: 0 0 2px #2a8a10; }
  `;

  private tool(t: Tool) {
    if (t.kind === "sep") return html`<span class="sep"></span>`;
    if (t.kind === "grip") return html`<span class="grip"></span>`;
    const glyph = t.icon ? html`<mt-icon name=${t.icon}></mt-icon>` : nothing;
    if (t.kind === "split") return html`<button class="btn split" aria-label=${t.icon!}>${glyph}<span class="caret"></span></button>`;
    if (t.kind === "letter" || t.kind === "boxed") return html`<button class="btn"><span class=${t.kind}>${t.text}</span></button>`;
    return html`<button class=${classMap({ btn: true, wide: !!t.text, on: !!t.on, off: !!t.off })} aria-label=${t.text ?? t.icon!}>${glyph}${t.text ?? nothing}</button>`;
  }

  private arrow(up: boolean) {
    return up
      ? html`<svg viewBox="0 0 9 9"><path d="M4.500.5 8.500 4.500H6.500v4h-4v-4h-2z" fill="#2fa845" stroke="#1b7e2e" stroke-width=".7"/></svg>`
      : html`<svg viewBox="0 0 9 9"><path d="M4.500 8.500.5 4.500h2v-4h4v4h2z" fill="#e0532f" stroke="#a83415" stroke-width=".7"/></svg>`;
  }

  private titleBar() {
    return html`
      <header class="title">
        <svg class="glass" viewBox="0 0 1123 18" preserveAspectRatio="none" aria-hidden="true">
          <defs>
            <filter id="soft" x="-20%" y="-80%" width="140%" height="260%"><feGaussianBlur stdDeviation="3"/></filter>
            <linearGradient id="fade"><stop offset="0" stop-color="#dfe8f1"/><stop offset=".6" stop-color="#b9cfe6"/><stop offset="1" stop-color="#8fb8e2"/></linearGradient>
          </defs>
          <rect width="325" height="18" fill="url(#fade)"/>
          <path d="M318 18 325 2H478l10 16z" fill="#a9c8e9"/>
          <g filter="url(#soft)">
            <path d="M200 12h100" stroke="#7f9fc2" stroke-width="7"/>
            <path d="M355 12h48M408 12h45" stroke="#6f8fb4" stroke-width="6"/>
            <circle cx="343" cy="12" r="5" fill="#c04a6a"/>
            <ellipse cx="525" cy="15" rx="14" ry="6" fill="#a7d8f3"/>
            <ellipse cx="590" cy="14" rx="16" ry="8" fill="#9fd4f4"/>
            <ellipse cx="1028" cy="4" rx="10" ry="7" fill="#9dbfe3"/>
          </g>
        </svg>
        <div class="caption">
          <svg class="leaf" viewBox="0 0 11 10"><path d="M0 2c4-2 9-1 11 1L9 8C8 5 5 4 0 5z" fill="#63ad3c"/><path d="m1 4 8 1" stroke="#fff" stroke-width=".8"/></svg>
          <span>2088262478: Ausinvest MT4 Terminal</span>
        </div>
        <div class="winbtns">
          <button aria-label="最小化"><svg viewBox="0 0 12 10"><rect x="1.500" y="5.500" width="9" height="3" fill="#fff" stroke="#4a5b70" stroke-width=".8"/></svg></button>
          <button aria-label="还原"><svg viewBox="0 0 12 10"><path d="M4 1h7v6H4z" fill="#fff" stroke="#4a5b70"/><rect x="2" y="2.500" width="7" height="6.500" fill="#fff" stroke="#4a5b70"/><rect x="4.500" y="5" width="2" height="1.500" fill="#4a5b70"/></svg></button>
          <button class="quit" aria-label="关闭"><svg viewBox="0 0 12 10"><path d="m3 2 6 6M9 2 3 8" stroke="#6b2a22" stroke-width="3.800"/><path d="m3 2 6 6M9 2 3 8" stroke="#fff" stroke-width="2.200"/></svg></button>
        </div>
      </header>`;
  }

  private sidebar() {
    return html`
      <aside class="side">
        <section class="panel">
          <div class="head"><h2>市场报价: 16:24:53</h2><button class="x" aria-label="关闭">×</button></div>
          <div class="quotes">
            <table>
              <thead><tr><th>交易品种</th><th>卖价</th><th>买价</th></tr></thead>
              <tbody>
                ${quotes.map(([s, bid, ask, up]) => html`<tr class=${up ? "up" : "dn"}><td><span class="sym">${this.arrow(up)}${s}</span></td><td>${bid}</td><td>${ask}</td></tr>`)}
              </tbody>
            </table>
            <div class="scroll"><span class="caret flip"></span><span class="thumb"></span><span class="caret"></span></div>
          </div>
          <div class="tabs"><button class="tab cur">交易品种</button><button class="tab">即时图</button></div>
        </section>
        <section class="panel nav">
          <div class="head"><h2>导航</h2><button class="x" aria-label="关闭">×</button></div>
          <ul class="tree">
            <li>
              <div class="node root"><mt-icon name="pages"></mt-icon>Ausinvest MT4</div>
              <ul>
                ${tree.map(([icon, text], i) => html`<li><div class="node"><span class="twig">${i ? html`<button class="plus" aria-label="展开"></button>` : nothing}</span><mt-icon name=${icon}></mt-icon><span class=${i ? "" : "picked"}>${text}</span></div></li>`)}
              </ul>
            </li>
          </ul>
          <div class="tabs"><button class="tab cur">常用</button><button class="tab">收藏夹</button></div>
        </section>
      </aside>`;
  }

  private terminal() {
    return html`
      <section class="terminal">
        <div class="strip"><button class="x" aria-label="关闭">×</button><h2>终端</h2></div>
        <div class="pane">
          <div class="orders">
            <table>
              <colgroup><col style="width:109px" />${orderColumns.map(([, w]) => html`<col style="width:${w}px" />`)}<col /></colgroup>
              <thead><tr><th>订单 <span class="slash">/</span></th>${orderColumns.map(([t]) => html`<th>${t}</th>`)}<th>获利</th></tr></thead>
              <tbody>
                <tr>
                  <td colspan="11"><span class="sum"><svg viewBox="0 0 8 8"><circle cx="4" cy="4" r="2.500" fill="#ddd" stroke="#888"/><path d="m1 7 6-6" stroke="#999"/></svg><span>余额: 0.00</span><span>净值: 0.00</span><span>可用预付款: 0.00</span></span></td>
                  <td>0.00</td>
                </tr>
              </tbody>
            </table>
          </div>
          <div class="tabs">
            ${terminalTabs.map(([t, n], i) => html`<button class=${classMap({ tab: true, cur: i === 0 })}>${t}${n ? html`<span class="count">${n}</span>` : nothing}</button>`)}
          </div>
        </div>
      </section>`;
  }

  render() {
    const order = [0, 2, 1, 3];
    const cells = [111, 96, 134, 64, 66, 64];
    return html`
      ${this.titleBar()}
      <nav class="menu">${menus.map(([t, k]) => html`<button>${t}(<u>${k}</u>)</button>`)}</nav>
      <div class="tools">
        <div class="group">${mainTools.map((t) => this.tool(t))}</div>
        <div class="corner"><button aria-label="搜索"><mt-icon name="search"></mt-icon></button><button aria-label="聊天"><mt-icon name="chat"></mt-icon></button></div>
      </div>
      <div class="tools lines">
        <div class="group">
          ${lineTools.map((t) => this.tool(t))}
          ${periods.map((p) => html`<button class=${classMap({ btn: true, period: true, on: p === "H4" })}>${p}</button>`)}
        </div>
      </div>
      <main class="main">
        ${this.sidebar()}
        <div class="work">
          <div class="mdi">${charts.map((c) => html`<mt-window .chart=${c}></mt-window>`)}</div>
          <div class="tabs charttabs">
            ${order.map((i, n) => html`<button class=${classMap({ tab: true, cur: !!charts[i].active, bare: n === 0 })}>${charts[i].id}</button>`)}
            <span class="arrows"><span>◂</span><span>▸</span></span>
          </div>
        </div>
      </main>
      ${this.terminal()}
      <footer class="status">
        <span class="cell" style="width:469px">寻求帮助,请按F1键</span>
        ${cells.map((w, i) => html`<span class="cell" style="width:${w}px">${i ? nothing : "Default"}</span>`)}
        <span class="cell conn"><svg viewBox="0 0 19 12"><path d="M1.500 1v10M4.500 1v10M7.500 1v10M10.500 1v10M13.500 1v10M16.500 1v10" stroke="#a93222" stroke-width="2"/><path d="M0 7 19 4" stroke="#e8c0b5" stroke-width=".8"/></svg>帐户被禁用</span>
      </footer>
      <div class="floor"></div>
      <div class="ime">
        <svg viewBox="0 0 63 69" fill="none" aria-hidden="true">
          <path d="M0 0h30L12 22 0 46z" fill="#b7e58a" opacity=".5"/>
          <path d="M34 2c10 2 18 12 20 24-10-4-19-12-20-24zM62 6c-8 6-9 14-6 22 5-4 7-12 6-22zM6 28c8-8 20-7 28 2-10 7-20 6-28-2zM30 42c8-6 18-6 30-2-8 8-20 8-30 2z" fill="#8be04c" stroke="#2f9a16" stroke-width="1.300"/>
          <path d="M34 2c9 8 18 20 22 30M6 28c18-2 38 0 57 2M30 66c4-14 16-28 33-34M34 60c8-8 16-12 28-14" stroke="#2f9a16" stroke-width="1.300"/>
          <path d="M40 60c6-8 14-8 20-4-6 8-14 10-20 4z" fill="#b4f07a"/>
        </svg>
        <p>简<br />中设</p>
      </div>`;
  }
}
